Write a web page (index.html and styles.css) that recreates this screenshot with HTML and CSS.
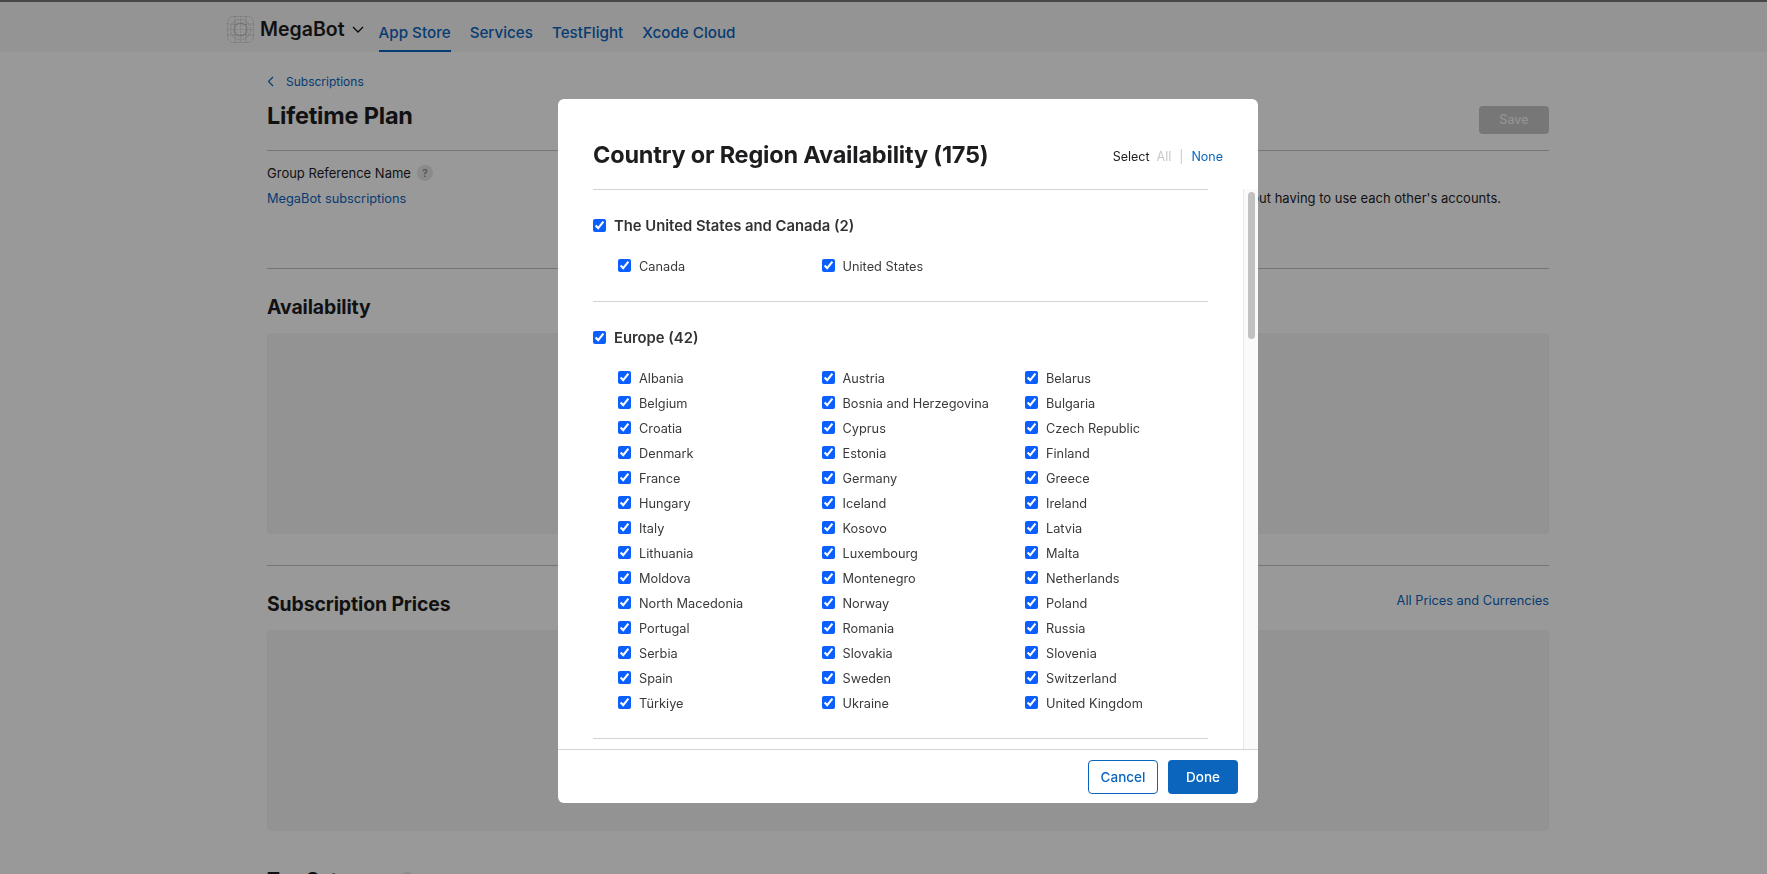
FILE: index.html
```html
<!DOCTYPE html>
<html lang="en">
<head>
  <meta charset="UTF-8">
  <title>Lifetime Plan - App Store Connect</title>
  <link rel="stylesheet" href="styles.css">
</head>
<body>
  <header class="topbar">
    <svg class="app-icon" width="27" height="27" viewBox="0 0 27 27" fill="none" stroke="#555" stroke-width="0.6">
      <rect x="0.5" y="0.5" width="26" height="26" rx="6" stroke-dasharray="1 1"/>
      <circle cx="13.5" cy="13.5" r="6.5"/>
      <circle cx="13.5" cy="13.5" r="10" stroke-dasharray="1 1"/>
      <path d="M0.5 8h26M0.5 19h26M8 0.5v26M19 0.5v26" stroke-dasharray="1.5 1"/>
      <path d="M0.5 13.5h26M13.5 0.5v26" stroke-dasharray="1 2"/>
    </svg>
    <span class="app-name">MegaBot</span>
    <svg class="app-chevron" width="12" height="7" viewBox="0 0 12 7" fill="none" stroke="#111" stroke-width="1.3">
      <path d="M1 1l5 5 5-5"/>
    </svg>
    <nav class="tabs">
      <a class="tab active">App Store</a>
      <a class="tab">Services</a>
      <a class="tab">TestFlight</a>
      <a class="tab">Xcode Cloud</a>
    </nav>
  </header>

  <main class="page">
    <a class="back">
      <svg width="7" height="11" viewBox="0 0 7 11" fill="none" stroke="#0b65bd" stroke-width="1.2">
        <path d="M6 1L1.5 5.5 6 10"/>
      </svg>
      Subscriptions
    </a>
    <div class="title-row">
      <h1>Lifetime Plan</h1>
      <button class="save">Save</button>
    </div>

    <section class="info">
      <div>
        <div class="field-label">Group Reference Name <span class="help">?</span></div>
        <a class="link">MegaBot subscriptions</a>
      </div>
      <p class="info-note">Family Sharing allows family members to use this subscription without having to use each other's accounts.</p>
    </section>

    <section class="block">
      <h2>Availability</h2>
      <div class="placeholder short"></div>
    </section>

    <section class="block prices">
      <div class="block-head">
        <h2>Subscription Prices</h2>
        <a class="link">All Prices and Currencies</a>
      </div>
      <div class="placeholder"></div>
    </section>

    <h2 class="tax">Tax Category <span class="help">?</span></h2>
  </main>

  <div class="overlay">
    <div class="modal">
      <div class="modal-head">
        <h3>Country or Region Availability (175)</h3>
        <div class="select-links">
          <span>Select</span>
          <span class="off">All</span>
          <span class="sep">|</span>
          <a class="link">None</a>
        </div>
      </div>

      <div class="modal-body">
        <div class="scroll-pane">
          <div class="group">
            <label class="group-head"><input type="checkbox" checked> The United States and Canada (2)</label>
            <div class="items">
              <label><input type="checkbox" checked> Canada</label>
              <label><input type="checkbox" checked> United States</label>
            </div>
          </div>

          <div class="group">
            <label class="group-head"><input type="checkbox" checked> Europe (42)</label>
            <div class="items">
              <label><input type="checkbox" checked> Albania</label>
              <label><input type="checkbox" checked> Austria</label>
              <label><input type="checkbox" checked> Belarus</label>
              <label><input type="checkbox" checked> Belgium</label>
              <label><input type="checkbox" checked> Bosnia and Herzegovina</label>
              <label><input type="checkbox" checked> Bulgaria</label>
              <label><input type="checkbox" checked> Croatia</label>
              <label><input type="checkbox" checked> Cyprus</label>
              <label><input type="checkbox" checked> Czech Republic</label>
              <label><input type="checkbox" checked> Denmark</label>
              <label><input type="checkbox" checked> Estonia</label>
              <label><input type="checkbox" checked> Finland</label>
              <label><input type="checkbox" checked> France</label>
              <label><input type="checkbox" checked> Germany</label>
              <label><input type="checkbox" checked> Greece</label>
              <label><input type="checkbox" checked> Hungary</label>
              <label><input type="checkbox" checked> Iceland</label>
              <label><input type="checkbox" checked> Ireland</label>
              <label><input type="checkbox" checked> Italy</label>
              <label><input type="checkbox" checked> Kosovo</label>
              <label><input type="checkbox" checked> Latvia</label>
              <label><input type="checkbox" checked> Lithuania</label>
              <label><input type="checkbox" checked> Luxembourg</label>
              <label><input type="checkbox" checked> Malta</label>
              <label><input type="checkbox" checked> Moldova</label>
              <label><input type="checkbox" checked> Montenegro</label>
              <label><input type="checkbox" checked> Netherlands</label>
              <label><input type="checkbox" checked> North Macedonia</label>
              <label><input type="checkbox" checked> Norway</label>
              <label><input type="checkbox" checked> Poland</label>
              <label><input type="checkbox" checked> Portugal</label>
              <label><input type="checkbox" checked> Romania</label>
              <label><input type="checkbox" checked> Russia</label>
              <label><input type="checkbox" checked> Serbia</label>
              <label><input type="checkbox" checked> Slovakia</label>
              <label><input type="checkbox" checked> Slovenia</label>
              <label><input type="checkbox" checked> Spain</label>
              <label><input type="checkbox" checked> Sweden</label>
              <label><input type="checkbox" checked> Switzerland</label>
              <label><input type="checkbox" checked> Türkiye</label>
              <label><input type="checkbox" checked> Ukraine</label>
              <label><input type="checkbox" checked> United Kingdom</label>
            </div>
          </div>

          <div class="group"></div>
        </div>
        <div class="scroll-track"><div class="scroll-thumb"></div></div>
      </div>

      <div class="modal-foot">
        <button class="btn outline">Cancel</button>
        <button class="btn primary">Done</button>
      </div>
    </div>
  </div>
</body>
</html>
```

FILE: styles.css
```css
* {
  box-sizing: border-box;
}
html, body {
  height: 100%;
  margin: 0;
  overflow: hidden;
}
body {
  background: #fff;
  color: #1d1d1f;
  font-family: Inter, "Liberation Sans", sans-serif;
  font-size: 13px;
}
a {
  color: #0b65bd;
  text-decoration: none;
}
h1, h2, h3, p {
  margin: 0;
}

/* top bar */
.topbar {
  display: flex;
  align-items: center;
  height: 52px;
  padding-left: 227px;
  background: #f7f7f7;
  border-top: 2px solid #777;
}
.app-icon {
  opacity: 0.55;
  margin-right: 6px;
  margin-top: 4px;
}
.app-name {
  font-size: 19.5px;
  font-weight: 600;
  margin-top: 4px;
}
.app-chevron {
  margin: 4px 0 0 7px;
}
.tabs {
  display: flex;
  gap: 19px;
  margin-left: 15px;
  align-self: stretch;
}
.tab {
  display: flex;
  align-items: center;
  padding-top: 13px;
  font-size: 15.2px;
  font-weight: 500;
  border-bottom: 2px solid transparent;
}
.tab.active {
  border-bottom-color: #0b65bd;
}

/* page behind the dialog */
.page {
  padding: 20px 218px 0 267px;
}
.back {
  display: flex;
  align-items: center;
  gap: 12px;
  font-size: 12px;
  height: 18px;
}
.title-row {
  display: flex;
  justify-content: space-between;
  align-items: center;
  height: 41px;
  margin-top: 6px;
}
h1 {
  font-size: 23.5px;
  font-weight: 700;
  letter-spacing: -0.2px;
  margin-top: -2px;
}
.save {
  width: 70px;
  height: 28px;
  margin-top: 6px;
  border: none;
  border-radius: 4px;
  background: #c6c6c6;
  color: #f3f3f3;
  font: 500 12.5px Inter, sans-serif;
}
.info {
  display: flex;
  justify-content: space-between;
  height: 118px;
  margin-top: 13px;
  padding-top: 13px;
  border-top: 1px solid #c4c4c4;
}
.field-label {
  display: flex;
  align-items: center;
  gap: 6px;
  height: 18px;
  margin-bottom: 8px;
}
.help {
  display: inline-flex;
  justify-content: center;
  align-items: center;
  width: 16px;
  height: 16px;
  border-radius: 50%;
  background: #e8e8e8;
  color: #888;
  font-size: 10px;
  font-weight: 600;
}
.link {
  display: inline-block;
  font-size: 12.8px;
}
.info-note {
  align-self: flex-start;
  margin: 25px 48px 0 0;
  white-space: nowrap;
  line-height: 18px;
}
.block {
  border-top: 1px solid #c4c4c4;
  height: 297px;
  padding-top: 26px;
}
.block h2, .tax {
  font-size: 19.4px;
  font-weight: 700;
  letter-spacing: -0.1px;
  line-height: 24px;
}
.block-head {
  display: flex;
  justify-content: space-between;
  align-items: flex-start;
}
.block-head .link {
  margin-top: 1px;
}
.placeholder {
  height: 201px;
  margin-top: 14px;
  border-radius: 4px;
  background: #f6f6f6;
}
.tax {
  display: flex;
  align-items: center;
  gap: 6px;
  margin-top: 6px;
}

/* dialog */
.overlay {
  position: fixed;
  inset: 0;
  padding: 99px 0 0 558px;
  background: rgba(0, 0, 0, 0.4);
}
.modal {
  display: flex;
  flex-direction: column;
  width: 700px;
  height: 704px;
  background: #fff;
  border-radius: 6px;
  overflow: hidden;
}
.modal-head {
  display: flex;
  justify-content: space-between;
  align-items: center;
  flex: none;
  height: 90px;
  padding: 20px 35px 0;
}
h3 {
  font-size: 23.5px;
  font-weight: 700;
  letter-spacing: -0.2px;
  color: #1d1d1f;
}
.select-links {
  display: flex;
  gap: 7px;
  margin-top: 5px;
  font-size: 12.5px;
}
.select-links .off {
  color: #c8c8c8;
}
.select-links .sep {
  color: #c8c8c8;
  margin: 0 1px;
}
.select-links .link {
  font-size: 12.5px;
}
.modal-body {
  display: flex;
  flex: 1;
  min-height: 0;
}
.scroll-pane {
  flex: 1;
  padding: 0 35px;
  overflow: hidden;
}
.group {
  border-top: 1px solid #d2d2d7;
  padding: 25px 0 23px;
}
.group-head {
  display: flex;
  align-items: center;
  gap: 8px;
  height: 20px;
  margin-bottom: 18px;
  padding-top: 2px;
  font-size: 14.8px;
  font-weight: 600;
  color: #333;
}
.items {
  display: grid;
  grid-template-columns: repeat(3, 203.5px);
  padding-left: 25px;
  font-size: 12.75px;
}
.items label {
  display: flex;
  align-items: center;
  gap: 8px;
  height: 25px;
  padding-top: 1px;
  color: #3a3a3c;
}
input[type="checkbox"] {
  flex: none;
  width: 13px;
  height: 13px;
  accent-color: #0b5fff;
}
.group-head input {
  margin: -2px 0 0;
}
.items input {
  margin: -1px 0 0;
}
.scroll-track {
  flex: none;
  width: 15px;
  padding: 3px 3px 0 4px;
  background: #fafafa;
  border-left: 1px solid #e8e8e8;
}
.scroll-thumb {
  height: 147px;
  border-radius: 4px;
  background: #c1c1c1;
}
.modal-foot {
  display: flex;
  justify-content: flex-end;
  gap: 10px;
  flex: none;
  height: 54px;
  padding: 10px 20px 0 0;
  border-top: 1px solid #d2d2d7;
}
.btn {
  width: 70px;
  height: 34px;
  border-radius: 4px;
  font: 500 13.5px Inter, sans-serif;
}
.btn.outline {
  background: #fff;
  color: #0b65bd;
  border: 1px solid #0b65bd;
}
.btn.primary {
  background: #0b65bd;
  color: #fff;
  border: none;
}
```
